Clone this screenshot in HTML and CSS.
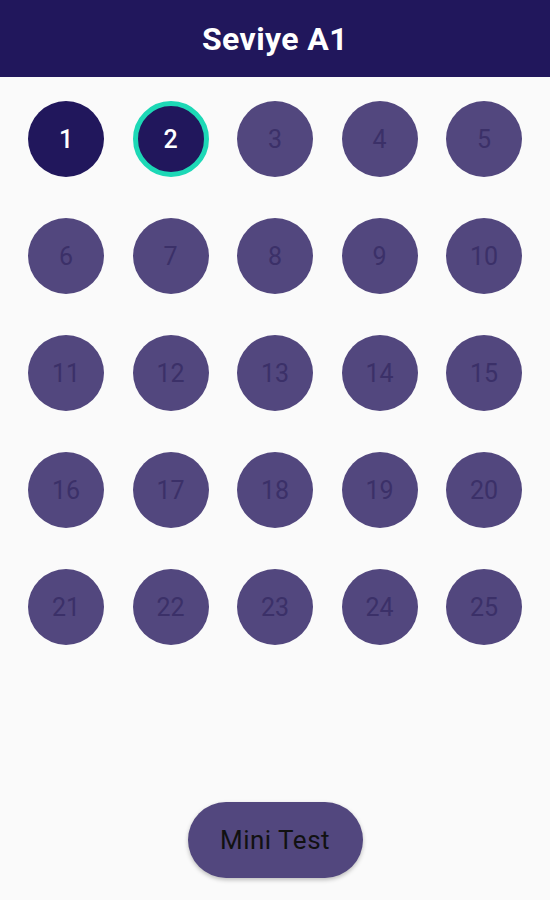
FILE: index.html
```html
<!DOCTYPE html>
<html lang="tr">

<head>
    <meta charset="UTF-8">
    <title>Seviye A1</title>
    <link rel="stylesheet" href="styles.css">
</head>

<body>
    <div class="screen">
        <header class="topbar">
            <h1>Seviye A1</h1>
        </header>

        <div class="levels">
            <div class="level done">1</div>
            <div class="level current">2</div>
            <div class="level locked">3</div>
            <div class="level locked">4</div>
            <div class="level locked">5</div>
            <div class="level locked">6</div>
            <div class="level locked">7</div>
            <div class="level locked">8</div>
            <div class="level locked">9</div>
            <div class="level locked">10</div>
            <div class="level locked">11</div>
            <div class="level locked">12</div>
            <div class="level locked">13</div>
            <div class="level locked">14</div>
            <div class="level locked">15</div>
            <div class="level locked">16</div>
            <div class="level locked">17</div>
            <div class="level locked">18</div>
            <div class="level locked">19</div>
            <div class="level locked">20</div>
            <div class="level locked">21</div>
            <div class="level locked">22</div>
            <div class="level locked">23</div>
            <div class="level locked">24</div>
            <div class="level locked">25</div>
        </div>

        <div class="bottom">
            <button class="test-btn">Mini Test</button>
        </div>
    </div>
</body>

</html>
```

FILE: styles.css
```css
body {
    margin: 0;
    font-family: Roboto, "Liberation Sans", sans-serif;
    background-color: #fafafa;
}

.screen {
    display: flex;
    flex-direction: column;
    height: 900px;
}

.topbar {
    height: 77px;
    background-color: #21175c;
    display: flex;
    align-items: center;
    justify-content: center;
}

.topbar h1 {
    margin: 0;
    color: white;
    font-size: 32px;
    font-weight: bold;
    letter-spacing: 0.4px;
}

.levels {
    display: grid;
    grid-template-columns: repeat(5, 76px);
    column-gap: 28.5px;
    row-gap: 41px;
    padding: 24px 28px 0;
}

.level {
    width: 76px;
    height: 76px;
    border-radius: 50%;
    box-sizing: border-box;
    display: flex;
    align-items: center;
    justify-content: center;
    font-size: 25px;
}

.done,
.current {
    background-color: #21175c;
    color: white;
    font-weight: 500;
}

.current {
    border: 5px solid #1dd8b6;
}

.locked {
    background-color: #52477e;
    color: #3b3068;
}

.bottom {
    margin-top: auto;
    display: flex;
    justify-content: center;
    padding-bottom: 22px;
}

.test-btn {
    width: 175px;
    height: 76px;
    border: none;
    border-radius: 38px;
    background-color: #52477e;
    color: #111;
    font-family: Roboto, "Liberation Sans", sans-serif;
    font-size: 26px;
    letter-spacing: 0.5px;
    box-shadow: 0 2px 4px rgba(0, 0, 0, 0.25);
}
```
